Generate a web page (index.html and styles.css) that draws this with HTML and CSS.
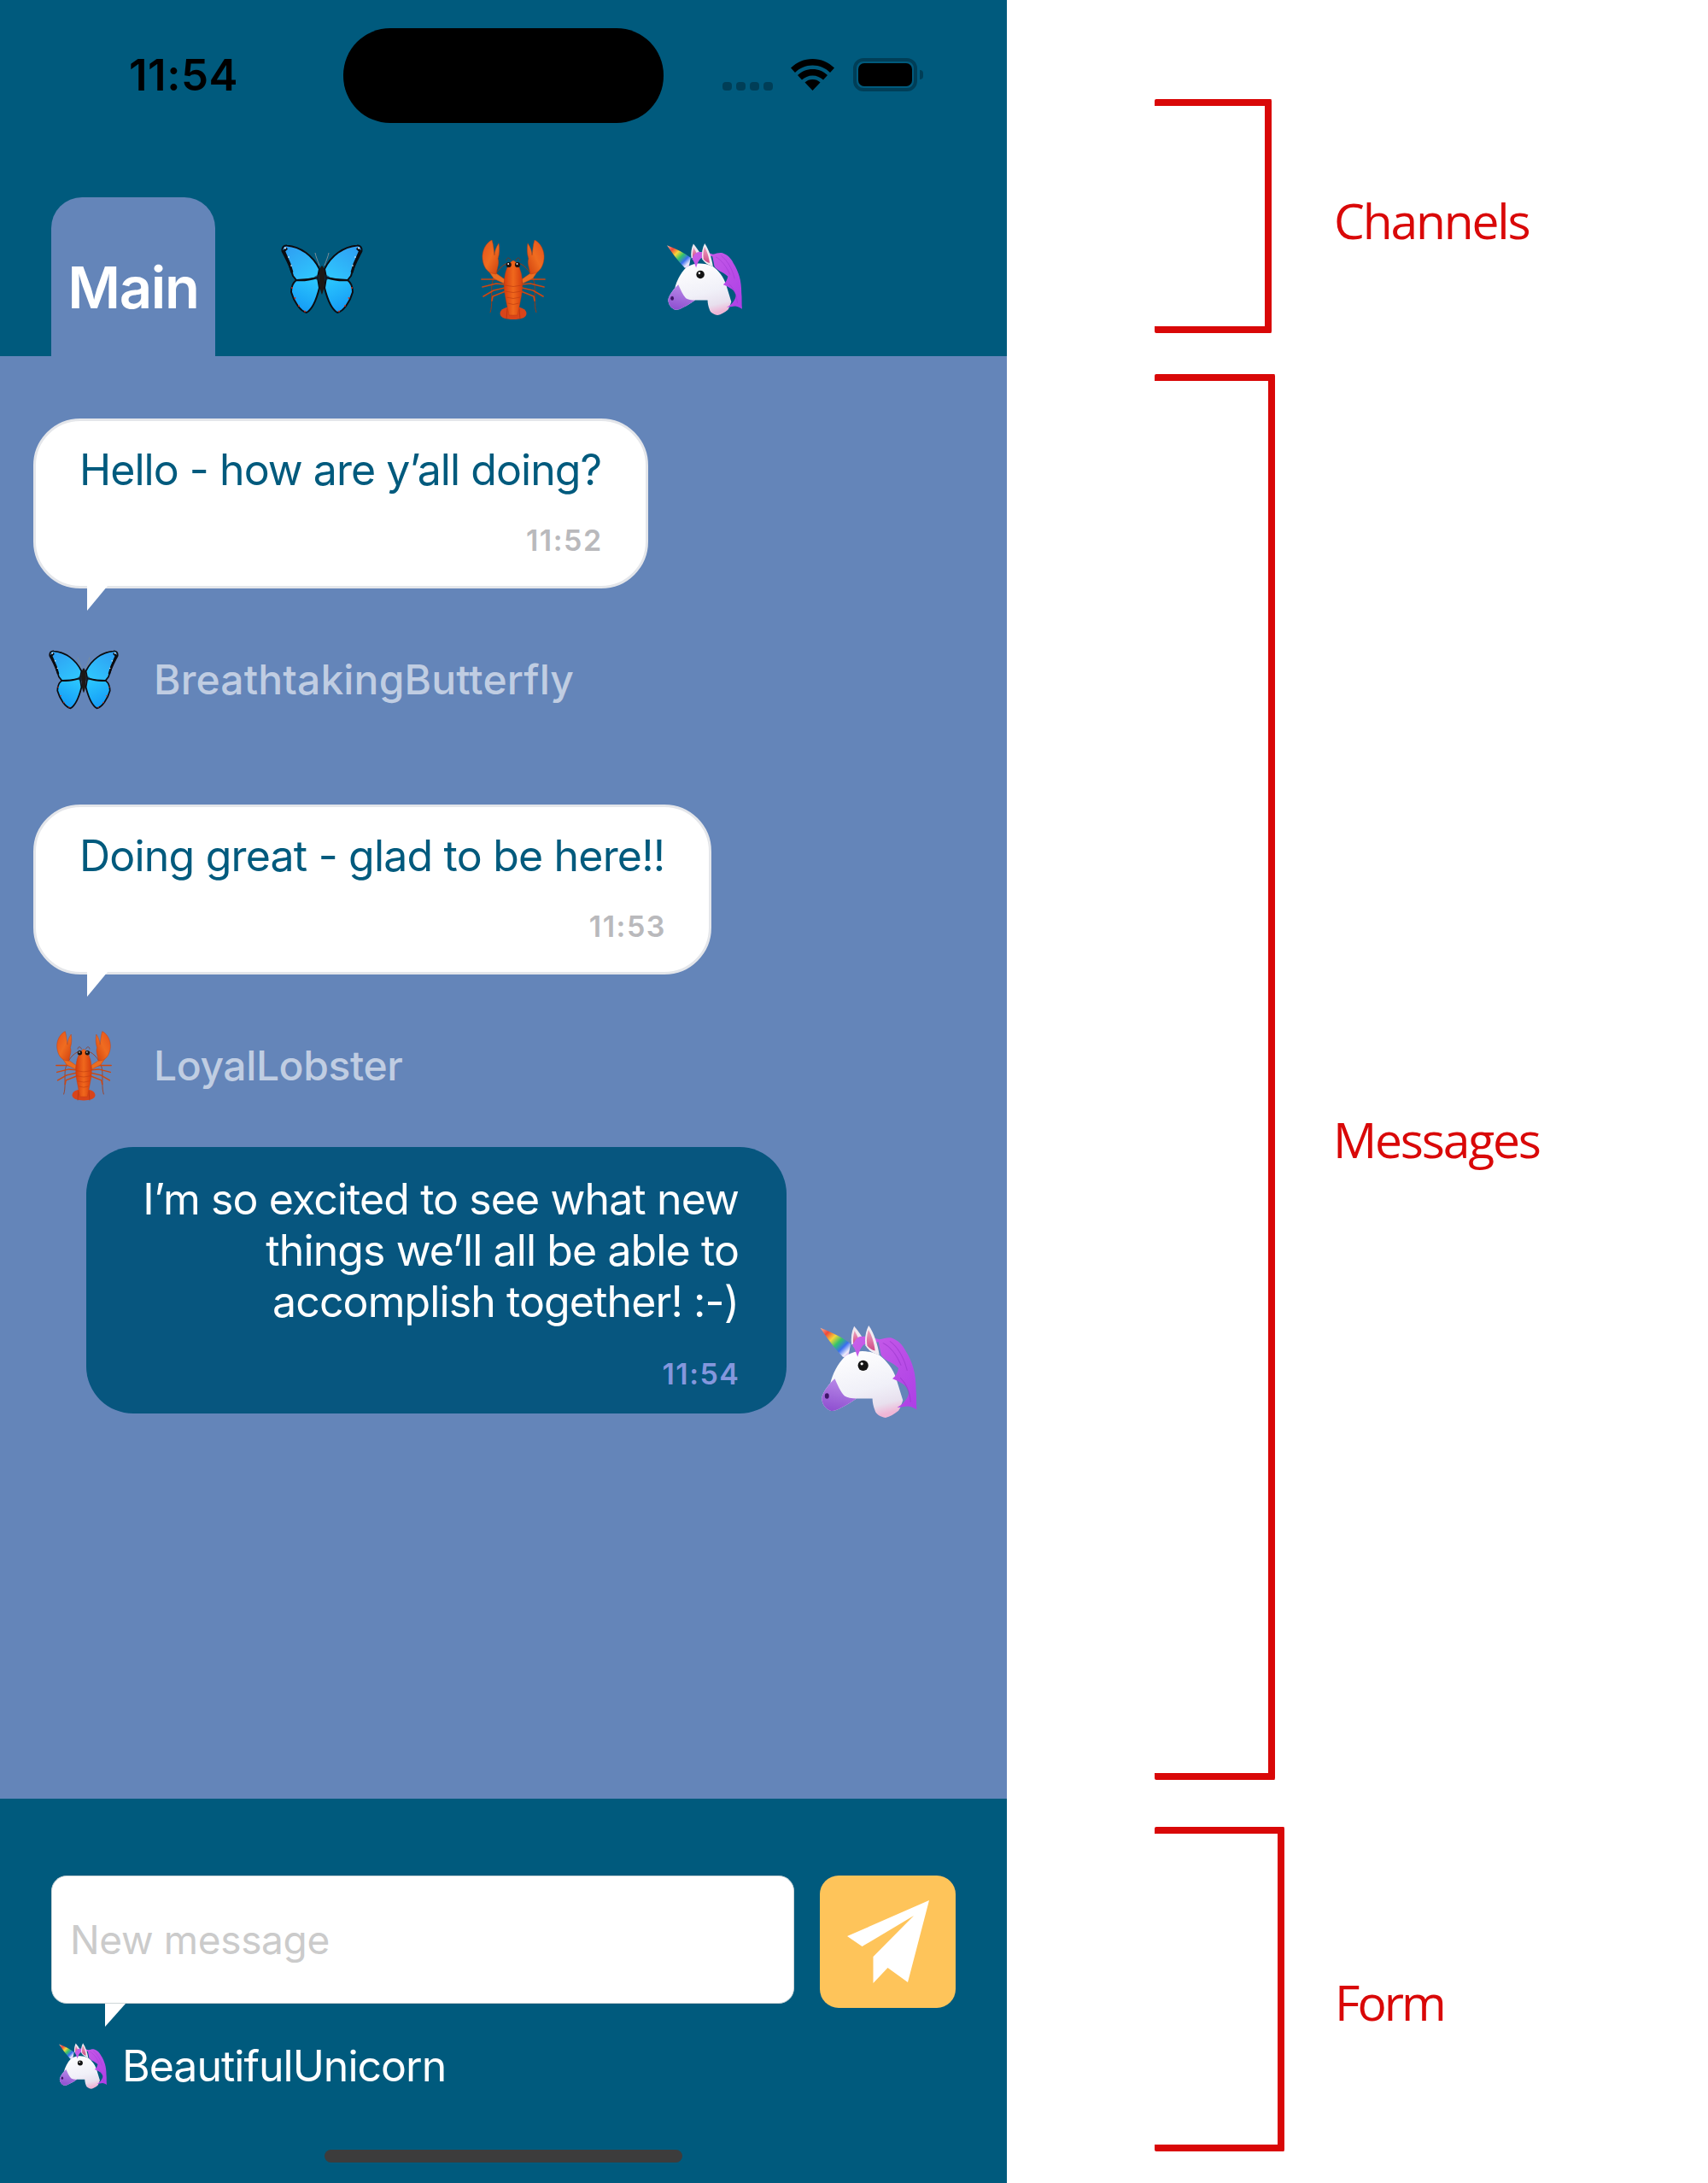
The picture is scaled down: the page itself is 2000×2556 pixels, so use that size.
FILE: index.html
```html
<!DOCTYPE html>
<html lang="en">
<head>
<meta charset="utf-8">
<title>Chat channels</title>
<link rel="stylesheet" href="styles.css">
</head>
<body>
<svg class="defs" aria-hidden="true">
  <defs>
    <linearGradient id="wingTop" x1="0.8" y1="0" x2="0" y2="1"><stop offset="0" stop-color="#2f9ff2"/><stop offset="1" stop-color="#2fcbff"/></linearGradient>
    <linearGradient id="wingLow" x1="0.2" y1="0" x2="0.6" y2="1"><stop offset="0" stop-color="#2cc8ff"/><stop offset="1" stop-color="#149af5"/></linearGradient>
    <linearGradient id="shell" x1="0" y1="0" x2="1" y2="0"><stop offset="0" stop-color="#d43c0e"/><stop offset="0.5" stop-color="#f0681c"/><stop offset="1" stop-color="#d43c0e"/></linearGradient>
    <linearGradient id="claw" x1="0" y1="0" x2="1" y2="1"><stop offset="0" stop-color="#e4501a"/><stop offset=".5" stop-color="#ef6c20"/><stop offset="1" stop-color="#cf3f0e"/></linearGradient>
    <linearGradient id="horn" x1="0" y1="0" x2="1" y2="1"><stop offset="0" stop-color="#f2b9a0"/><stop offset="0.2" stop-color="#f0483a"/><stop offset="0.38" stop-color="#f6d63a"/><stop offset="0.54" stop-color="#34c46a"/><stop offset="0.7" stop-color="#3a6ef0"/><stop offset="0.85" stop-color="#f2eefa"/><stop offset="1" stop-color="#a95ae0"/></linearGradient>
    <linearGradient id="head" x1="0.3" y1="0" x2="0.6" y2="1"><stop offset="0" stop-color="#ffffff"/><stop offset="0.6" stop-color="#f0f0f8"/><stop offset="0.85" stop-color="#e8e0ee"/><stop offset="1" stop-color="#efb6d6"/></linearGradient>
    <linearGradient id="muzzle" x1="0.5" y1="0" x2="0.3" y2="1"><stop offset="0" stop-color="#b88ae8"/><stop offset="1" stop-color="#8f4fd0"/></linearGradient>
    <linearGradient id="mane" x1="0" y1="0" x2="1" y2="1"><stop offset="0" stop-color="#c95fe8"/><stop offset="1" stop-color="#ad3fe6"/></linearGradient>
    <linearGradient id="ear" x1="0" y1="0" x2="0" y2="1"><stop offset="0" stop-color="#eea5c0"/><stop offset="1" stop-color="#cf4a86"/></linearGradient>

    <g id="bfWing">
      <path d="M50 28C58 12 72 2 88 .5C92 0 94 3 93.5 7C90 14 84 24 81 36L77 41C70 41 60 40 52 38Z" fill="url(#wingTop)" stroke="#0c0c10" stroke-width="2" stroke-linejoin="round"/>
      <path d="M52 38C62 41 70 42 77 41C81 44 83 49 83 55C80 66 72 78 65 79C58 75 53 62 50 50Z" fill="url(#wingLow)" stroke="#0c0c10" stroke-width="2" stroke-linejoin="round"/>
      <path d="M88 3.500 91.500 7 88.500 14 85 22 82 32" fill="none" stroke="#0c0c10" stroke-width="3"/>
      <circle cx="90" cy="3.500" r="1" fill="#fff"/><circle cx="86" cy="14" r=".8" fill="#fff"/><circle cx="83" cy="24" r=".8" fill="#fff"/>
      <circle cx="78.500" cy="62" r=".9" fill="#d8301c"/><circle cx="74" cy="71" r=".9" fill="#d8301c"/><circle cx="67" cy="77.500" r=".9" fill="#d8301c"/><circle cx="82" cy="50" r=".9" fill="#d8301c"/>
      <path d="M50 24C52 18 54 14 55 9" fill="none" stroke="#7d8e98" stroke-width="1"/>
    </g>
    <symbol id="butterfly" viewBox="-1 -1 96 82">
      <use href="#bfWing"/>
      <use href="#bfWing" transform="translate(94) scale(-1 1)"/>
      <ellipse cx="47" cy="38" rx="9" ry="3.500" fill="#10202e" opacity=".6"/>
      <path d="M47 24C50 26 51 34 50 42C50 50 48 56 47 58C46 56 44 50 44 42C43 34 44 26 47 24Z" fill="#1d1815"/>
    </symbol>

    <g id="lobSide">
      <path d="M32 27C24 29 15 40 13 52C12 64 14 76 11 85" fill="none" stroke="#a8360c" stroke-width=".9"/>
      <g fill="none" stroke="#cf4710" stroke-width="1.700" stroke-linecap="round" stroke-linejoin="round">
        <path d="M28 48 17 46 1 46"/><path d="M28 52 18 51 2 55"/><path d="M28 56 15 59 3 66"/><path d="M29 60 14 66 13 71"/>
      </g>
      <path d="M9 36 18 39 28 46 27 51 15 45Z" fill="#ea6e22" stroke="#c23e0e" stroke-width=".5"/>
      <path d="M13 0C6 3 1 13 2 22C3 31 7 37 13 39L18 40C19 33 22 27 20 22C22 16 22 10 21 4C18 8 16 14 16 18C15 12 15 6 13 0Z" fill="url(#claw)" stroke="#c23e0e" stroke-width=".5"/>
    </g>
    <symbol id="lobster" viewBox="0 0 76 93">
      <use href="#lobSide"/>
      <use href="#lobSide" transform="translate(76) scale(-1 1)"/>
      <path d="M22.500 86C22.500 81 29 78 38 78C47 78 53.500 81 53.500 86C53.500 91 47 93 38 93C29 93 22.500 91 22.500 86Z" fill="#d8441a"/>
      <path d="M31 80 30 93M45 80 46 93" stroke="#b5340f" stroke-width=".8" fill="none"/>
      <path d="M38 24C33 26 31 32 29 38C27 46 27 56 28 62C30 74 32 82 33 88H43C44 82 46 74 48 62C49 56 49 46 47 38C45 32 43 26 38 24Z" fill="url(#shell)" stroke="#c23e0e" stroke-width=".5"/>
      <path d="M28 53Q38 56 48 53M28.500 60Q38 63 47.500 60M30 67Q38 70 46 67M31.500 74Q38 77 44.500 74" stroke="#bf3d10" stroke-width=".7" fill="none"/>
      <path d="M35 24C34 20 30 20 30 24M41 24C42 20 46 20 46 24" fill="none" stroke="#8f2d0b" stroke-width=".7"/>
      <circle cx="32.700" cy="29" r="3.100" fill="#1b1412"/><circle cx="43" cy="29" r="3.100" fill="#1b1412"/>
      <circle cx="32.200" cy="28" r=".9" fill="#fff"/><circle cx="42.500" cy="28" r=".9" fill="#fff"/>
    </symbol>

    <symbol id="unicorn" viewBox="0 0 111 106">
      <path d="M0 2.700C14 8 26 14 35 21L32 37 26 36C16 26 7 13 0 2.700Z" fill="url(#horn)"/>
      <path d="M39 .700C36 7 35 14 36 22L50 16C46 10 42 4 39 .700Z" fill="#efe6ee"/>
      <path d="M39.500 6C38 11 37.500 16 38 21L45 17C43 13 41 9 39.500 6Z" fill="url(#ear)"/>
      <path d="M28 36C36 30 50 26 68 34C76 40 84 50 87 60L95 86C93 92 92 95 90 98C85 102 80 105 75 106C69 105 64 102 63 98C61 93 60 88 60 84C54 84 47 84 41.700 84C36 88 30 92 25 94C20 97 15 99 11.700 98C6 96 2 90 1.700 84C2 80 5 74 11.700 66C14 56 20 44 28 36Z" fill="url(#head)"/>
      <path d="M11.700 66C5 74 2 80 1.700 84C2 90 6 96 11.700 98C15 99 20 97 25 94C30 92 36 88 41.700 84C36 84 31 83 28 81C23 76 20 68 16.700 61Z" fill="url(#muzzle)"/>
      <path d="M37 23C40 16 44 12 48 12.700C52 12 60 13 68 16C73 15 78 13 82 14.300C90 17 95 23 98 29C102 35 105 42 107 49C109 56 110 64 110 73C111 81 110 90 111 96.700C108 95 105 93 101 92.700C97 93 92 94 88.300 94.300C93 92 96 89 98 86C100 83 102 80 101.700 76C100 71 97 68 93 66C90 64 86 62 83 61C87 58 89 54 90 49C86 45 82 43 78 41C75 39 72 37 70 34C69 28 68 24 67 19C60 20 55 21 50 22C47 25 45 29 43 36C41 31 40 26 37 23Z" fill="url(#mane)"/>
      <path d="M55.700 0C52 7 51 15 52 23C55 28 60 32 68 34C66 22 62 9 55.700 0Z" fill="#f2ecf2"/>
      <path d="M55.500 5C53.500 11 53 17 54 23C56 26 59 28 63 29C62 20 59 11 55.500 5Z" fill="url(#ear)"/>
      <path d="M72 20C80 24 88 34 93 46M80 18C88 24 96 36 100 52M92 60C98 66 103 76 104 88" fill="none" stroke="#8f2fc4" stroke-width="1" opacity=".5"/>
      <circle cx="49.300" cy="46" r="6" fill="#141414"/><circle cx="47.800" cy="44" r="1.600" fill="#fff"/>
      <ellipse cx="7.700" cy="81" rx="2.400" ry="3.200" fill="#3f1668"/>
    </symbol>
  </defs>
</svg>

<main class="page">
  <section class="phone">
    <header class="top">
      <div class="status">
        <span class="status__time">11:54</span>
        <span class="status__island"></span>
        <div class="status__icons">
          <span class="signal"><i></i><i></i><i></i><i></i></span>
          <svg class="wifi" viewBox="0 0 51 37"><path d="M25.500 0C15.500 0 7 4 0 10.500L5 16C10.500 10.500 17.500 7.500 25.500 7.500S40.500 10.500 46 16L51 10.500C44 4 35.500 0 25.500 0Z"/><path d="M25.500 12C18.500 12 13 14.500 8 19L13 24.500C16.500 21.500 20.500 19.500 25.500 19.500S34.500 21.500 38 24.500L43 19C38 14.500 32.500 12 25.500 12Z"/><path d="M25.500 24C22 24 19 25 16.500 27.500L25.500 37 34.500 27.500C32 25 29 24 25.500 24Z"/></svg>
          <span class="battery"><span class="battery__fill"></span></span>
        </div>
      </div>
      <nav class="tabs">
        <span class="tab tab--active">Main</span>
        <span class="tab"><svg class="emoji emoji--bf"><use href="#butterfly"/></svg></span>
        <span class="tab"><svg class="emoji emoji--lob"><use href="#lobster"/></svg></span>
        <span class="tab"><svg class="emoji emoji--uni"><use href="#unicorn"/></svg></span>
      </nav>
    </header>

    <div class="feed">
      <article class="msg msg--spaced">
        <div class="bubble bubble--in">
          <p class="bubble__text">Hello - how are y’all doing?</p>
          <time class="bubble__time">11:52</time>
        </div>
        <div class="sender">
          <span class="sender__icon"><svg class="emoji emoji--bf-sm"><use href="#butterfly"/></svg></span>
          <span class="sender__name">BreathtakingButterfly</span>
        </div>
      </article>
      <article class="msg">
        <div class="bubble bubble--in">
          <p class="bubble__text bubble__text--loose">Doing great - glad to be here!!</p>
          <time class="bubble__time">11:53</time>
        </div>
        <div class="sender">
          <span class="sender__icon"><svg class="emoji emoji--lob-sm"><use href="#lobster"/></svg></span>
          <span class="sender__name sender__name--tight">LoyalLobster</span>
        </div>
      </article>
      <article class="msg msg--own">
        <div class="bubble bubble--own">
          <p class="bubble__text">I’m so excited to see what new<br>things we’ll all be able to<br>accomplish together! :-)</p>
          <time class="bubble__time">11:54</time>
        </div>
        <svg class="emoji emoji--uni-lg"><use href="#unicorn"/></svg>
      </article>
    </div>

    <form class="composer">
      <div class="composer__row">
        <div class="composer__field"><input class="composer__input" type="text" placeholder="New message"></div>
        <button class="composer__send" type="button" aria-label="Send">
          <svg class="plane" viewBox="0 0 96 97"><path d="M96 0 71 96 47.500 79 30.500 97V66L78 18 17.500 54 0 42Z"/></svg>
        </button>
      </div>
      <div class="me">
        <svg class="emoji emoji--uni-sm"><use href="#unicorn"/></svg>
        <span class="me__name">BeautifulUnicorn</span>
      </div>
      <span class="homebar"></span>
    </form>
  </section>

  <aside class="notes">
    <div class="note note--channels">
      <span class="note__bracket"></span>
      <span class="note__label">Channels</span>
    </div>
    <div class="note note--messages">
      <span class="note__bracket"></span>
      <span class="note__label">Messages</span>
    </div>
    <div class="note note--form">
      <span class="note__bracket"></span>
      <span class="note__label">Form</span>
    </div>
  </aside>
</main>
</body>
</html>
```

FILE: styles.css
```css
* { box-sizing: border-box; }
html, body { margin: 0; padding: 0; background: #fff; }
body { font-family: "Inter", "Liberation Sans", sans-serif; }
p { margin: 0; }
.defs { position: absolute; width: 0; height: 0; overflow: hidden; }
.emoji { display: block; }

.page { display: flex; width: 2000px; height: 2556px; }

/* phone */
.phone { width: 1179px; height: 2556px; display: flex; flex-direction: column; background: #6485b9; }
.top { height: 417px; background: #005a7d; padding-top: 33px; flex: none; }

.status { display: flex; align-items: center; height: 111px; padding-left: 151px; }
.status__time { width: 251px; font-size: 51px; font-weight: 600; color: #000; line-height: 60px; margin-top: -2px; letter-spacing: .500px; }
.status__island { width: 375px; height: 111px; border-radius: 55px; background: #000; }
.status__icons { display: flex; align-items: flex-start; margin-left: 69px; height: 40px; margin-top: -2px; }
.signal { display: flex; gap: 5px; margin-top: 28px; }
.signal i { width: 11px; height: 10px; border-radius: 4px; background: rgba(0, 0, 0, .3); }
.wifi { width: 51px; height: 37px; margin-left: 21px; fill: #000; margin-top: 1px; }
.battery { position: relative; width: 75px; height: 39px; margin-left: 22px; border: 4px solid rgba(0, 0, 0, .3); border-radius: 12px; padding: 2px; }
.battery::after { content: ""; position: absolute; right: -11px; top: 10px; width: 4px; height: 11px; border-radius: 0 4px 4px 0; background: rgba(0, 0, 0, .3); }
.battery__fill { display: block; width: 100%; height: 100%; background: #000; border-radius: 7px; }

.tabs { display: flex; margin-top: 87px; height: 186px; padding-left: 60px; }
.tab { width: 224px; display: flex; align-items: center; justify-content: center; padding-top: 6px; }
.tab--active { width: 192px; margin-right: 13px; background: #6485b9; border-radius: 36px 36px 0 0; color: #fff; font-size: 67px; font-weight: 600; line-height: 80px; padding-top: 25px; letter-spacing: -1.300px; }
.emoji--bf { width: 96px; height: 82px; }
.emoji--lob { width: 76px; height: 93px; }
.emoji--uni { width: 88px; height: 84px; }

/* messages */
.feed { flex: 1; padding-top: 73px; }
.msg { margin-bottom: 50px; }
.msg--spaced { margin-bottom: 101px; }
.bubble { position: relative; width: fit-content; border: 3px solid transparent; border-radius: 55px; padding: 27px 52px 0 51px; text-align: right; }
.bubble__text { font-size: 50px; line-height: 60px; letter-spacing: -.950px; font-weight: 400; }
.bubble__text--loose { letter-spacing: -.800px; }
.bubble__time { display: block; margin-top: 33px; font-size: 34px; line-height: 40px; font-weight: 600; letter-spacing: 1.500px; margin-right: -1.500px; }
.bubble--in { margin-left: 39px; background: #fff; border-color: #e4e6ea; color: #005a7d; padding-bottom: 33px; }
.bubble--in .bubble__time { color: #b9b9bc; }
.bubble--in::after { content: ""; position: absolute; left: 60px; top: 100%; width: 24px; height: 29px; background: #fff; clip-path: polygon(0 0, 100% 0, 0 100%); }
.bubble--own { width: 820px; margin-left: 101px; background: #07567f; color: #fff; padding: 28px 53px 23px 0; }
.bubble--own .bubble__text { letter-spacing: -.900px; }
.bubble--own .bubble__time { color: #8497dd; margin-top: 35px; }

.sender { display: flex; align-items: center; height: 90px; margin-top: 62px; }
.sender__icon { width: 180px; display: flex; justify-content: center; padding: 0 33px 0 49px; }
.sender__name { font-size: 48px; line-height: 56px; font-weight: 500; color: rgba(255, 255, 255, .6); letter-spacing: .150px; }
.sender__name--tight { letter-spacing: -.400px; }
.emoji--bf-sm { width: 82px; height: 70px; flex: none; }
.emoji--lob-sm { width: 66px; height: 82px; flex: none; }

.msg--own { display: flex; align-items: flex-end; }
.emoji--uni-lg { width: 114px; height: 108px; margin-left: 39px; margin-bottom: -5px; flex: none; }

/* form */
.composer { height: 450px; flex: none; background: #005a7d; padding: 90px 60px 0; display: flex; flex-direction: column; }
.composer__row { display: flex; align-items: flex-start; gap: 30px; }
.composer__field { position: relative; width: 870px; height: 150px; }
.composer__field::after { content: ""; position: absolute; left: 63px; top: 100%; width: 24px; height: 27px; background: #fff; clip-path: polygon(0 0, 100% 0, 0 100%); }
.composer__input { display: block; width: 100%; height: 100%; border: 1px solid #cdd6d8; border-radius: 18px; background: #fff; padding: 0 21px; font: 400 46px "Inter", "Liberation Sans", sans-serif; letter-spacing: -.350px; outline: none; }
.composer__input::placeholder { color: #cbcbcb; opacity: 1; }
.composer__send { width: 159px; height: 155px; border: 0; padding: 0; background: #fec45a; border-radius: 22px; display: flex; align-items: center; justify-content: center; }
.plane { width: 96px; height: 97px; fill: #fff; }

.me { display: flex; align-items: center; gap: 18px; margin-top: 38px; padding-left: 9px; }
.me__name { font-size: 50px; line-height: 60px; color: #fff; letter-spacing: -1px; }
.emoji--uni-sm { width: 56px; height: 54px; flex: none; }
.homebar { align-self: center; width: 419px; height: 15px; border-radius: 8px; background: #3c3c3c; margin-top: auto; margin-bottom: 24px; }

/* annotations */
.notes { flex: 1; padding: 116px 0 0 173px; display: flex; flex-direction: column; }
.note { display: grid; grid-template-columns: 210px 1fr; color: #d90808; }
.note__bracket { border: 8px solid #d90808; border-left: 0; border-radius: 2px; }
.note__label { font-family: "Open Sans", "Liberation Sans", sans-serif; font-size: 57px; line-height: 60px; letter-spacing: -2.200px; }
.note--channels { height: 274px; }
.note--channels .note__bracket { width: 137px; }
.note--channels .note__label { padding-top: 112px; }
.note--messages { height: 1646px; margin-top: 48px; }
.note--messages .note__bracket { width: 141px; }
.note--messages .note__label { padding: 866px 0 0 0; margin-left: -1px; }
.note--form { height: 380px; margin-top: 55px; }
.note--form .note__bracket { width: 152px; }
.note--form .note__label { padding: 175px 0 0 1px; letter-spacing: -3px; }
```
